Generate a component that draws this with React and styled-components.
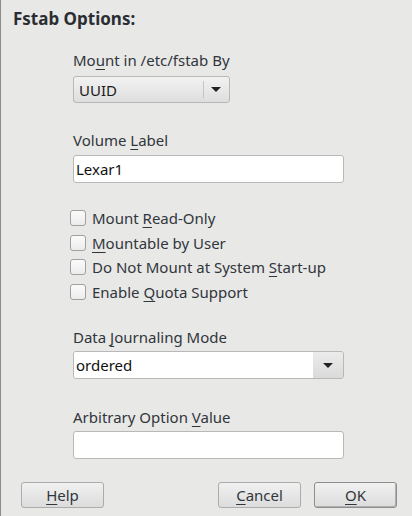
import React from 'react';
import styled, { createGlobalStyle } from 'styled-components';

const GlobalStyle = createGlobalStyle`
	html, body {
		margin: 0;
		padding: 0;
		background: #e8e8e7;
	}
	body {
		font-family: 'Noto Sans', 'Open Sans', sans-serif;
		color: #31363b;
	}
`;

const Dialog = styled.div`
	box-sizing: border-box;
	width: 412px;
	height: 516px;
	display: flex;
	flex-direction: column;
	border-left: 1px solid #8c8c8c;
	background: #e8e8e7;
`;

const Title = styled.div`
	font-size: 17px;
	font-weight: 700;
	line-height: 22px;
	color: #2a2e33;
	padding: 8px 0 0 12px;
`;

const Form = styled.div`
	display: flex;
	flex-direction: column;
	margin-left: 72px;
	width: 271px;
	flex: 1;
`;

const Field = styled.div`
	display: flex;
	flex-direction: column;
	margin-top: ${p => p.$top}px;
	gap: ${p => p.$gap}px;
`;

const Label = styled.div`
	font-size: 15px;
	line-height: 19px;
	color: #31363b;
	white-space: nowrap;
`;

const Key = styled.span`
	text-decoration: underline;
	text-decoration-thickness: 1px;
	text-underline-offset: 3px;
`;

const Combo = styled.div`
	box-sizing: border-box;
	width: ${p => p.$width}px;
	height: 27px;
	display: flex;
	align-items: center;
	border: 1px solid #b8b8b8;
	border-radius: 3px;
	background: linear-gradient(#f2f2f2, #dedede);
	font-size: 15px;
	color: #1b1b1b;
	padding-left: 5px;
`;

const ComboText = styled.div`
	flex: 1;
`;

const Separator = styled.div`
	width: 1px;
	height: 17px;
	background: #c4c4c4;
`;

const Arrow = styled.div`
	width: 0;
	height: 0;
	border-left: 5px solid transparent;
	border-right: 5px solid transparent;
	border-top: 5px solid #222;
	margin: 0 8px 0 7px;
`;

const EditCombo = styled.div`
	box-sizing: border-box;
	width: 271px;
	height: 28px;
	display: flex;
	border: 1px solid #b8b8b8;
	border-radius: 3px;
	overflow: hidden;
`;

const EditPart = styled.div`
	flex: 1;
	background: #fff;
	font-size: 15px;
	line-height: 26px;
	padding-left: 2px;
	color: #111;
`;

const ButtonPart = styled.div`
	width: 30px;
	display: flex;
	align-items: center;
	justify-content: center;
	background: linear-gradient(#ececec, #dadada);

	> div {
		margin: 0;
	}
`;

const Input = styled.div`
	box-sizing: border-box;
	width: 271px;
	height: 28px;
	border: 1px solid #b8b8b8;
	border-radius: 3px;
	background: #fff;
	font-size: 15px;
	line-height: 26px;
	padding-left: 2px;
	color: #111;
`;

const Checks = styled.div`
	display: flex;
	flex-direction: column;
	margin-top: 23px;
	margin-left: -3px;
`;

const CheckRow = styled.div`
	display: flex;
	align-items: center;
	height: 24.5px;
	gap: 6px;
	font-size: 15px;
	color: #31363b;
`;

const Box = styled.div`
	box-sizing: border-box;
	width: 16px;
	height: 16px;
	border: 1px solid #a0a0a0;
	border-radius: 3px;
	background: linear-gradient(#fbfbfb, #ececec);
`;

const Footer = styled.div`
	display: flex;
	align-items: center;
	padding: 0 15px 8px 20px;
	gap: 13px;
`;

const Spacer = styled.div`
	flex: 1;
`;

const Button = styled.div`
	box-sizing: border-box;
	width: 83px;
	height: 26px;
	display: flex;
	align-items: center;
	justify-content: center;
	border: 1px solid ${p => (p.$default ? '#8e8e8e' : '#acacac')};
	box-shadow: ${p => (p.$default ? 'inset -1px -1px 0 #b0b0b0' : 'none')};
	border-radius: 3px;
	background: linear-gradient(#f1f1f1, #dcdcdc);
	font-size: 15px;
	color: #31363b;
`;

export default function App() {
	return (
		<Dialog>
			<GlobalStyle />
			<Title>Fstab Options:</Title>
			<Form>
				<Field $top={21} $gap={6}>
					<Label>
						Mo<Key>u</Key>nt in /etc/fstab By
					</Label>
					<Combo $width={157}>
						<ComboText>UUID</ComboText>
						<Separator />
						<Arrow />
					</Combo>
				</Field>
				<Field $top={28} $gap={5}>
					<Label>
						Volume <Key>L</Key>abel
					</Label>
					<Input>Lexar1</Input>
				</Field>
				<Checks>
					<CheckRow>
						<Box />
						<span>
							Mount <Key>R</Key>ead-Only
						</span>
					</CheckRow>
					<CheckRow>
						<Box />
						<span>
							<Key>M</Key>ountable by User
						</span>
					</CheckRow>
					<CheckRow>
						<Box />
						<span>
							Do Not Mount at System <Key>S</Key>tart-up
						</span>
					</CheckRow>
					<CheckRow>
						<Box />
						<span>
							Enable <Key>Q</Key>uota Support
						</span>
					</CheckRow>
				</Checks>
				<Field $top={24} $gap={4}>
					<Label>
						Data <Key>J</Key>ournaling Mode
					</Label>
					<EditCombo>
						<EditPart>ordered</EditPart>
						<ButtonPart>
							<Arrow />
						</ButtonPart>
					</EditCombo>
				</Field>
				<Field $top={29} $gap={4}>
					<Label>
						Arbitrary Option <Key>V</Key>alue
					</Label>
					<Input />
				</Field>
			</Form>
			<Footer>
				<Button>
					<span>
						<Key>H</Key>elp
					</span>
				</Button>
				<Spacer />
				<Button>
					<span>
						<Key>C</Key>ancel
					</span>
				</Button>
				<Button $default>
					<span>
						<Key>O</Key>K
					</span>
				</Button>
			</Footer>
		</Dialog>
	);
}
